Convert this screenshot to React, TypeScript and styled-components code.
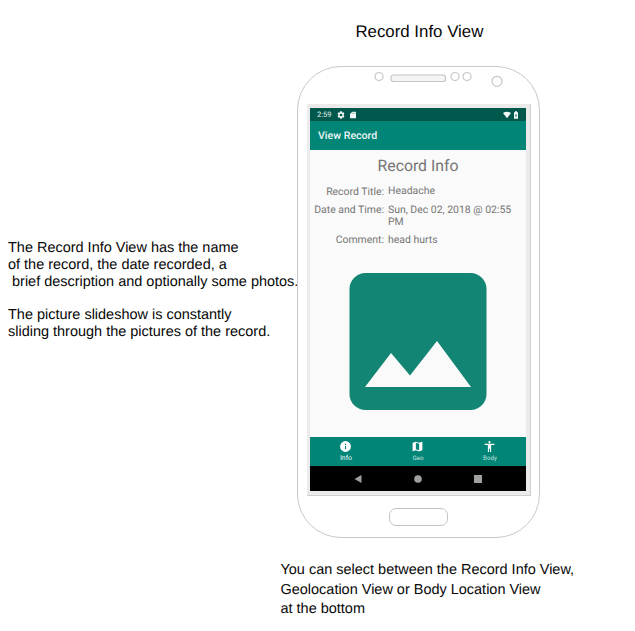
import React from "react";
import styled, { createGlobalStyle } from "styled-components";

const GlobalStyle = createGlobalStyle`
  * { box-sizing: border-box; }
  body { margin: 0; background: #fff; overflow: hidden; }
`;

const Page = styled.main`
  display: grid;
  grid-template-columns: 297px 243px 1fr;
  grid-template-rows: 66px 472px 1fr;
  width: 635px;
  height: 631px;
  background: #fff;
  color: #080808;
  font-family: "Liberation Sans", Arial, sans-serif;
  text-rendering: geometricPrecision;
`;

const Title = styled.h1`
  grid-column: 2;
  grid-row: 1;
  margin: 22px 0 0 58.4px;
  font-size: 16.85px;
  line-height: 20px;
  font-weight: 400;
  white-space: nowrap;
`;

const Notes = styled.div<{ $size: number; $leading: number }>`
  font-size: ${(p) => p.$size}px;
  line-height: ${(p) => p.$leading}px;
  white-space: pre;
`;

const SideNotes = styled(Notes)`
  grid-column: 1;
  grid-row: 2;
  padding: 174px 0 0 8px;
`;

const BottomNotes = styled(Notes)`
  grid-column: 1 / -1;
  grid-row: 3;
  padding: 23px 0 0 280.5px;
`;

const Paragraph = styled.p`
  margin: 0 0 16.8px;
`;

const Phone = styled.section`
  grid-column: 2;
  grid-row: 2;
  display: flex;
  flex-direction: column;
  align-items: center;
  border: 1.5px solid #c9c9c9;
  border-radius: 44px;
  background: #fff;
`;

const Sensors = styled.svg`
  flex: none;
  width: 240px;
  height: 37px;
`;

const Bezel = styled.div`
  flex: none;
  align-self: flex-start;
  width: 224px;
  height: 392px;
  margin-left: 9px;
  padding: 4px 5px 4px 3px;
  background: #ebebeb;
  border-right: 1px solid #cfcfcf;
  border-bottom: 1px solid #cfcfcf;
`;

const HomeButton = styled.div`
  flex: none;
  width: 59px;
  height: 18px;
  margin-top: 12px;
  border: 1px solid #c4c4c4;
  border-radius: 7px;
`;

const Screen = styled.div`
  display: flex;
  flex-direction: column;
  width: 216px;
  height: 383px;
  background: #fafafa;
  font-family: Roboto, sans-serif;
`;

const StatusBar = styled.div`
  display: flex;
  align-items: center;
  height: 13px;
  padding: 0 6px 0 7px;
  background: #00574b;
  color: #e8f3f1;
  font-size: 7.5px;
`;

const StatusIcon = styled.svg<{ $gap: number }>`
  width: 8px;
  height: 8px;
  margin-left: ${(p) => p.$gap}px;
  fill: #f2f8f7;
`;

const Spacer = styled.span`
  flex: 1;
`;

const AppBar = styled.header`
  display: flex;
  align-items: center;
  height: 29px;
  padding-left: 8px;
  background: #008577;
  color: #eef7f6;
  font-size: 10.6px;
  font-weight: 500;
`;

const Content = styled.div`
  display: flex;
  flex-direction: column;
  align-items: center;
  height: 287px;
  color: #757575;
`;

const Heading = styled.h2`
  margin: 5px 0 0;
  font-size: 15.8px;
  line-height: 22px;
  font-weight: 400;
`;

const Fields = styled.dl`
  display: grid;
  grid-template-columns: 74px 134px;
  column-gap: 4px;
  width: 100%;
  height: 96px;
  margin: 0;
  grid-template-rows: 18px 30px 18px;
  padding-top: 8px;
  font-size: 10.45px;
  line-height: 12px;
`;

const Label = styled.dt`
  display: flex;
  justify-content: flex-end;
  white-space: nowrap;
  padding-top: 1px;
`;

const Value = styled.dd<{ $drop?: number }>`
  margin: 0;
  padding-top: ${(p) => p.$drop ?? 1}px;
  white-space: pre;
`;

const Photo = styled.svg`
  width: 138px;
  height: 138px;
`;

const TabBar = styled.nav`
  display: grid;
  grid-template-columns: repeat(3, 1fr);
  height: 29px;
  background: #008577;
`;

const Tab = styled.div<{ $size: number; $tone: string }>`
  display: flex;
  flex-direction: column;
  align-items: center;
  padding-top: 3px;
  color: ${(p) => p.$tone};
  font-size: ${(p) => p.$size}px;
  line-height: 11px;
  white-space: nowrap;
`;

const TabIcon = styled.svg`
  flex: none;
  width: 13px;
  height: 13px;
  margin-right: 1px;
  fill: #fff;
`;

const SystemBar = styled.div`
  display: flex;
  justify-content: center;
  align-items: center;
  gap: 52px;
  height: 25px;
  padding-right: 1px;
  background: #000;
`;

const SystemIcon = styled.svg`
  width: 8px;
  height: 8px;
  fill: #a0a0a0;
`;

const tabs = [
  {
    label: "Info",
    size: 7,
    tone: "#f4faf9",
    path: "M12 2a10 10 0 1 0 0 20 10 10 0 0 0 0-20zm1 15h-2v-6h2v6zm0-8h-2V7h2v2z",
  },
  {
    label: "Geo",
    size: 6.2,
    tone: "#c4e2de",
    path: "M20.5 3l-.16.03L15 5.1 9 3 3.36 4.9c-.21.07-.36.25-.36.48V20.5c0 .28.22.5.5.5l.16-.03L9 18.9l6 2.1 5.64-1.9c.21-.07.36-.25.36-.48V3.5c0-.28-.22-.5-.5-.5zM15 19l-6-2.11V5l6 2.11V19z",
  },
  {
    label: "Body",
    size: 6.2,
    tone: "#c4e2de",
    path: "M12 2a2 2 0 1 1 0 4 2 2 0 0 1 0-4zm9 7h-6v13h-2v-6h-2v6H9V9H3V7h18v2z",
  },
];

export default function App() {
  return (
    <>
      <GlobalStyle />
      <Page>
        <Title>Record Info View</Title>
        <SideNotes $size={14.48} $leading={16.8}>
          <Paragraph>{"The Record Info View has the name\nof the record, the date recorded, a\n brief description and optionally some photos."}</Paragraph>
          <Paragraph>{"The picture slideshow is constantly\nsliding through the pictures of the record."}</Paragraph>
        </SideNotes>
        <Phone>
          <Sensors viewBox="0 0 240 37" fill="none" stroke="#c6c6c6" strokeWidth="1.2">
            <circle cx="80" cy="9.5" r="4" />
            <rect x="92" y="8" width="54.5" height="6.5" rx="2.5" fill="#f5f5f5" />
            <circle cx="156" cy="9.5" r="4" />
            <circle cx="168" cy="9.5" r="4" />
            <circle cx="198" cy="14.3" r="5" />
          </Sensors>
          <Bezel>
            <Screen>
              <StatusBar>
                2:59
                <StatusIcon $gap={5.5} viewBox="0 0 24 24">
                  <path
                    fillRule="evenodd"
                    d="M9.5 1h5l.6 3 1.8 1 2.9-1 2.4 4.2-2.2 2v3.6l2.2 2-2.4 4.2-2.9-1-1.8 1-.6 3h-5l-.6-3-1.8-1-2.9 1-2.4-4.2 2.2-2v-3.6l-2.2-2L4.2 4l2.9 1 1.8-1zM12 8a4 4 0 1 0 0 8 4 4 0 0 0 0-8z"
                  />
                </StatusIcon>
                <StatusIcon $gap={4} viewBox="0 0 24 24">
                  <path d="M10 2h9q2 0 2 2v16q0 2-2 2H5q-2 0-2-2V9z" />
                  <path d="M9 5h2v4H9zM13 5h2v4h-2zM17 5h2v4h-2z" fill="#7fa8a2" />
                </StatusIcon>
                <Spacer />
                <StatusIcon $gap={0} viewBox="0 0 24 24">
                  <path d="M0 6Q12-2 24 6L12 22z" />
                </StatusIcon>
                <StatusIcon $gap={1.5} viewBox="0 0 24 24">
                  <path d="M9 1h6v3h3v19H6V4h3z" />
                  <path d="M13 7l-5 8h3v5l5-8h-3z" fill="#4f8c83" />
                </StatusIcon>
              </StatusBar>
              <AppBar>View Record</AppBar>
              <Content>
                <Heading>Record Info</Heading>
                <Fields>
                  <Label>Record Title:</Label>
                  <Value $drop={0}>Headache</Value>
                  <Label>Date and Time:</Label>
                  <Value>{"Sun, Dec 02, 2018 @ 02:55\nPM"}</Value>
                  <Label>Comment:</Label>
                  <Value>head hurts</Value>
                </Fields>
                <Photo viewBox="0 0 138 138">
                  <rect x="0.5" y="0" width="137" height="137" rx="16" fill="#138575" />
                  <path d="M16 114L42 80l19 22.500 27-34.500 34 46z" fill="#fafafa" />
                </Photo>
              </Content>
              <TabBar>
                {tabs.map((tab) => (
                  <Tab key={tab.label} $size={tab.size} $tone={tab.tone}>
                    <TabIcon viewBox="0 0 24 24">
                      <path d={tab.path} />
                    </TabIcon>
                    {tab.label}
                  </Tab>
                ))}
              </TabBar>
              <SystemBar>
                <SystemIcon viewBox="0 0 8 8"><path d="M0.5 4L7.5 0v8z" /></SystemIcon>
                <SystemIcon viewBox="0 0 8 8"><circle cx="4" cy="4" r="3.8" /></SystemIcon>
                <SystemIcon viewBox="0 0 8 8"><path d="M0 0h8v8H0z" /></SystemIcon>
              </SystemBar>
            </Screen>
          </Bezel>
          <HomeButton />
        </Phone>
        <BottomNotes $size={14.48} $leading={19.5}>
          {"You can select between the Record Info View,\nGeolocation View or Body Location View\nat the bottom"}
        </BottomNotes>
      </Page>
    </>
  );
}
